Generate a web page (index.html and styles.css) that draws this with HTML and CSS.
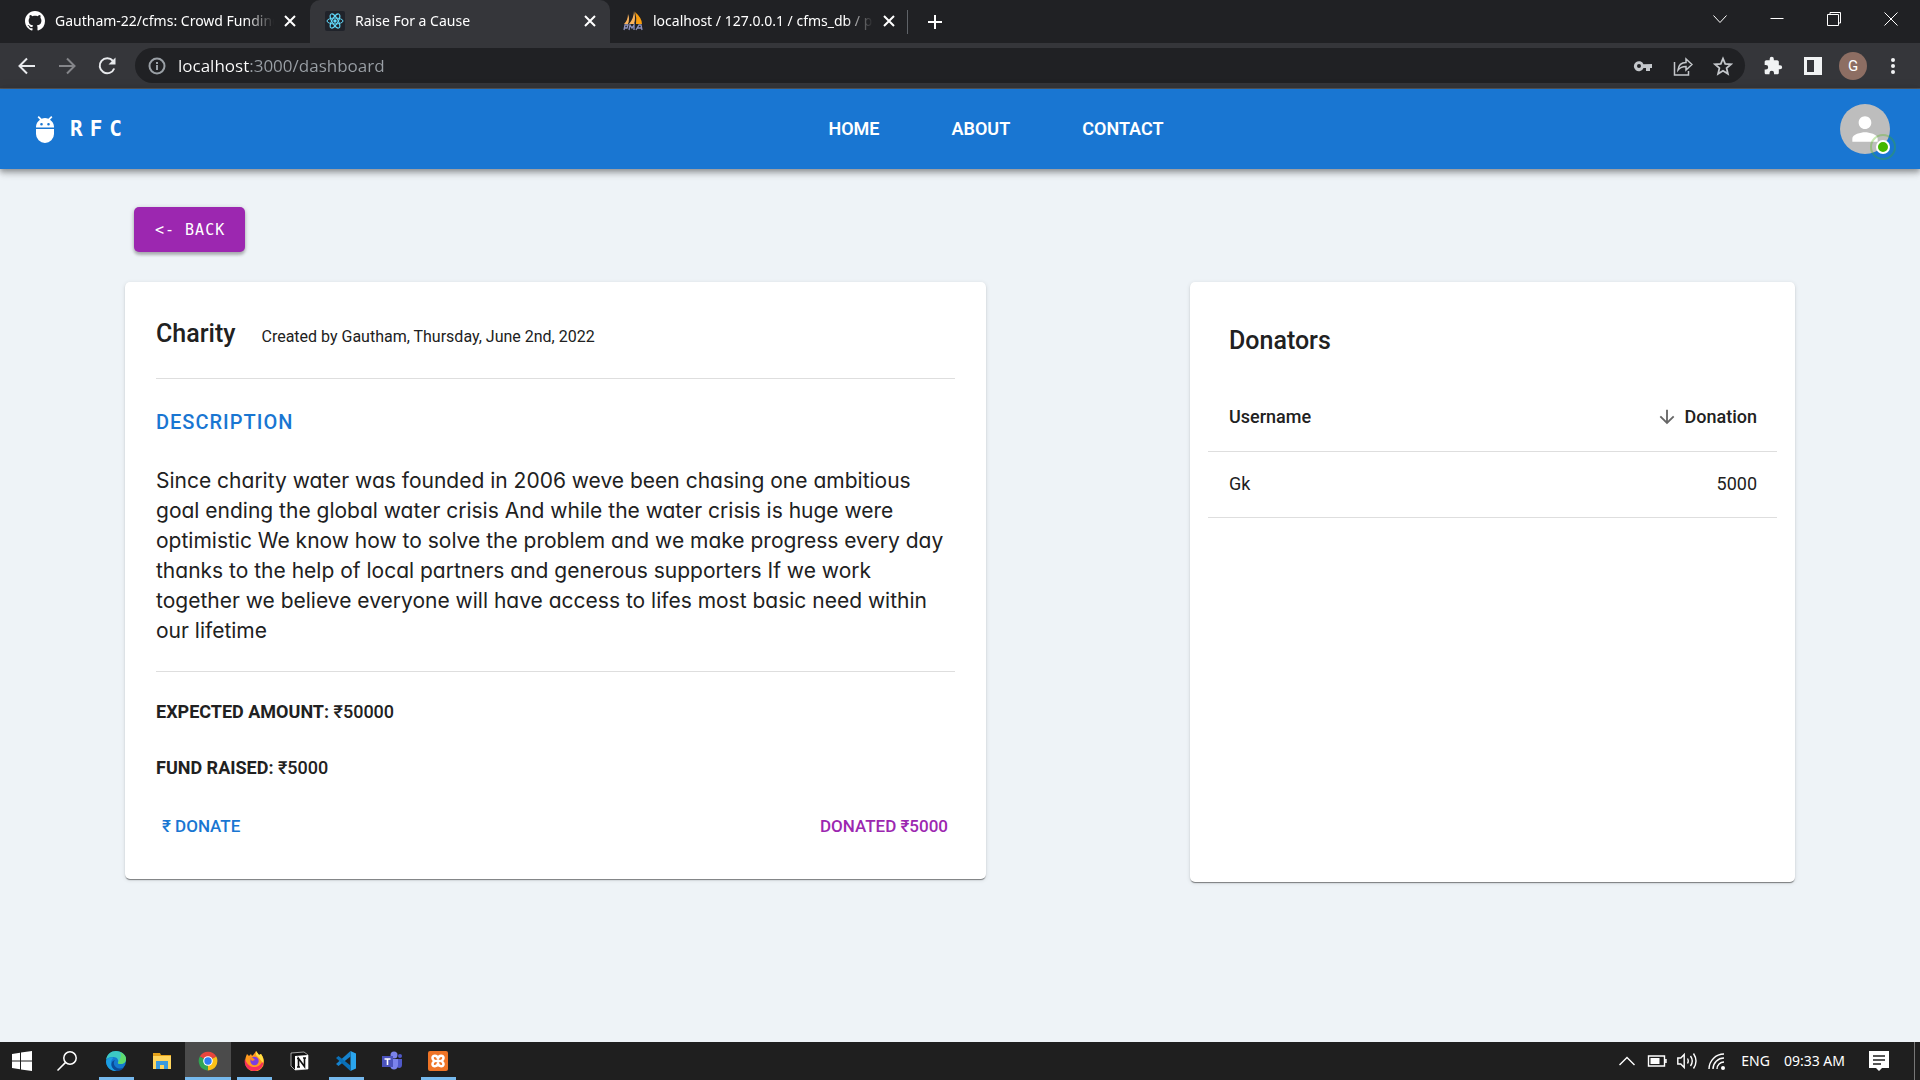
FILE: index.html
```html
<!DOCTYPE html>
<html lang="en">
<head>
<meta charset="utf-8">
<meta name="viewport" content="width=device-width, initial-scale=1">
<title>Raise For a Cause</title>
<link rel="stylesheet" href="styles.css">
</head>
<body>
<header class="browser">
  <div class="tabstrip">
    <div class="tab">
      <svg class="favicon" viewBox="0 0 16 16" fill="#fff"><path d="M8 0C3.58 0 0 3.58 0 8c0 3.54 2.29 6.53 5.47 7.59.4.07.55-.17.55-.38 0-.19-.01-.82-.01-1.49-2.01.37-2.53-.49-2.69-.94-.09-.23-.48-.94-.82-1.13-.28-.15-.68-.52-.01-.53.63-.01 1.08.58 1.23.82.72 1.21 1.87.87 2.33.66.07-.52.28-.87.51-1.07-1.78-.2-3.64-.89-3.64-3.95 0-.87.31-1.59.82-2.15-.08-.2-.36-1.02.08-2.12 0 0 .67-.21 2.2.82.64-.18 1.32-.27 2-.27s1.36.09 2 .27c1.53-1.04 2.2-.82 2.2-.82.44 1.1.16 1.92.08 2.12.51.56.82 1.27.82 2.15 0 3.07-1.87 3.75-3.65 3.95.29.25.54.73.54 1.48 0 1.07-.01 1.93-.01 2.2 0 .21.15.46.55.38A8.01 8.01 0 0 0 16 8c0-4.42-3.58-8-8-8z"/></svg>
      <button class="tab-title">Gautham-22/cfms: Crowd Funding</button>
      <button class="tab-close" aria-label="Close tab"><svg viewBox="0 0 12 12"><path d="M1 1l10 10M11 1L1 11"/></svg></button>
    </div>
    <div class="tab tab-active">
      <svg class="favicon" viewBox="0 0 20 20"><rect width="20" height="20" rx="2" fill="#20232a"/><g fill="none" stroke="#61dafb"><ellipse cx="10" cy="10" rx="8" ry="3"/><ellipse cx="10" cy="10" rx="8" ry="3" transform="rotate(60 10 10)"/><ellipse cx="10" cy="10" rx="8" ry="3" transform="rotate(120 10 10)"/></g><circle cx="10" cy="10" r="1.7" fill="#61dafb"/></svg>
      <button class="tab-title">Raise For a Cause</button>
      <button class="tab-close" aria-label="Close tab"><svg viewBox="0 0 12 12"><path d="M1 1l10 10M11 1L1 11"/></svg></button>
    </div>
    <div class="tab">
      <svg class="favicon" viewBox="0 0 20 20"><path d="M1 13Q5 9 5 3Q7 8 5 13zM6 13Q11 7 11 0Q13 8 11 13z" fill="#f9b25c"/><path d="M12 1Q19 7 19 13H13Q14 7 12 1z" fill="#f89c0e"/><path d="M1 19l1-5h3l-1 3H2M6 19l1-5 2 3 2-3v5M13 19l3-5h2l1 5M14 17h4" fill="none" stroke="#8f92bd" stroke-width="1.300"/></svg>
      <button class="tab-title">localhost / 127.0.0.1 / cfms_db / projects</button>
      <button class="tab-close" aria-label="Close tab"><svg viewBox="0 0 12 12"><path d="M1 1l10 10M11 1L1 11"/></svg></button>
    </div>
    <button class="new-tab" aria-label="New tab"><svg viewBox="0 0 16 16"><path d="M8 1v14M1 8h14"/></svg></button>
    <div class="window-controls">
      <button aria-label="Search tabs"><svg viewBox="0 0 14 14"><path d="M.5 3.500l6.500 7 6.500-7"/></svg></button>
      <button aria-label="Minimize"><svg viewBox="0 0 14 14"><path d="M.5 6.500h13"/></svg></button>
      <button aria-label="Restore"><svg viewBox="0 0 14 14"><path d="M.5 2.500h11v11H.5zM3 2.500v-2h10.500V11h-2"/></svg></button>
      <button aria-label="Close"><svg viewBox="0 0 14 14"><path d="M.5.500l13 13M13.500.500l-13 13"/></svg></button>
    </div>
  </div>
  <div class="toolbar">
    <button class="tool" aria-label="Back"><svg viewBox="0 0 20 20"><path d="M18 10H3M10 2.500L2.500 10l7.500 7.500"/></svg></button>
    <button class="tool tool-dim" aria-label="Forward"><svg viewBox="0 0 20 20"><path d="M2 10h15M10 2.500l7.500 7.500-7.500 7.500"/></svg></button>
    <button class="tool" aria-label="Reload"><svg viewBox="0 0 20 20"><path d="M16 5a7.500 7.500 0 1 0 1.200 7.500"/><path d="M18.500 1.500v7h-7z" fill="#e8eaed" stroke="none"/></svg></button>
    <div class="omnibox">
      <svg class="info" viewBox="0 0 18 18"><circle cx="9" cy="9" r="7.500"/><path d="M9 8v5M9 5v2"/></svg>
      <input class="url" type="text" aria-label="Address" value="localhost:3000/dashboard">
      <button class="omni-btn" aria-label="Passwords"><svg viewBox="0 0 20 20"><path d="M10.500 8.300A5 5 0 1 0 10.500 12H13v3h4v-3h2V8zM6 12a2 2 0 1 1 0-4 2 2 0 0 1 0 4z" fill="#c4c7cb" fill-rule="evenodd"/></svg></button>
      <button class="omni-btn" aria-label="Share"><svg viewBox="0 0 20 20" fill="none" stroke="#c4c7cb" stroke-width="1.500"><path d="M1.500 6v13h14v-4"/><path d="M5 14c.5-5 3-7.500 8-7.500V3l6 5.500-6 5.500v-3.500c-4 0-6 1-8 3.500z"/></svg></button>
      <button class="omni-btn" aria-label="Bookmark"><svg viewBox="0 0 20 20" fill="none" stroke="#c4c7cb" stroke-width="1.800"><path d="M10 2.500l2.200 5.300 5.800.5-4.400 3.800 1.300 5.700L10 14.800l-4.900 3 1.300-5.700L2 8.300l5.800-.5z"/></svg></button>
    </div>
    <button class="ext" aria-label="Extensions"><svg viewBox="0 0 24 24" fill="#f1f3f4"><path d="M20.500 11H19V7c0-1.100-.9-2-2-2h-4V3.500a2.500 2.500 0 0 0-5 0V5H4c-1.100 0-2 .9-2 2v3.800h1.500a2.700 2.700 0 0 1 0 5.400H2V20c0 1.100.9 2 2 2h3.800v-1.500a2.700 2.700 0 0 1 5.400 0V22H17c1.100 0 2-.9 2-2v-4h1.500a2.500 2.500 0 0 0 0-5z"/></svg></button>
    <button class="ext" aria-label="Side panel"><svg viewBox="0 0 20 20"><path d="M1 1h18v18H1zM4 4v12h7V4z" fill="#f1f3f4" fill-rule="evenodd"/></svg></button>
    <button class="profile">G</button>
    <button class="ext" aria-label="Menu"><svg viewBox="0 0 20 20" fill="#f1f3f4"><circle cx="10" cy="4" r="2"/><circle cx="10" cy="10" r="2"/><circle cx="10" cy="16" r="2"/></svg></button>
  </div>
</header>

<div class="appbar">
  <a class="brand" href="#"><svg viewBox="0 0 18 28" fill="#fff"><path d="M0 12.500a9 9 0 0 1 4-7.800L1.600 2.200 2.800 1l2.800 2.800a9 9 0 0 1 6.800 0L15.200 1l1.200 1.200L14 4.700a9 9 0 0 1 4 7.800zM5.500 8a1.300 1.300 0 1 0 0 2.600 1.300 1.300 0 0 0 0-2.600zm7 0a1.300 1.300 0 1 0 0 2.600 1.300 1.300 0 0 0 0-2.600zM0 14h18v5a9 9 0 0 1-18 0z" fill-rule="evenodd"/></svg><span>RFC</span></a>
  <nav class="nav"><a href="#">HOME</a><a href="#">ABOUT</a><a href="#">CONTACT</a></nav>
  <button class="avatar" aria-label="Account"><svg viewBox="0 0 24 24" fill="#fff"><path d="M12 12c2.210 0 4-1.790 4-4s-1.790-4-4-4-4 1.790-4 4 1.790 4 4 4zm0 2c-2.670 0-8 1.340-8 4v2h16v-2c0-2.660-5.330-4-8-4z"/></svg><span class="status"></span></button>
</div>

<main class="page">
  <button class="back">&lt;- BACK</button>
  <div class="cards">
    <article class="card campaign">
      <div class="campaign-head"><h1>Charity</h1><span>Created by Gautham, Thursday, June 2nd, 2022</span></div>
      <section class="campaign-body">
        <h2>DESCRIPTION</h2>
        <p>Since charity water was founded in 2006 weve been chasing one ambitious<br>goal ending the global water crisis And while the water crisis is huge were<br>optimistic We know how to solve the problem and we make progress every day<br>thanks to the help of local partners and generous supporters If we work<br>together we believe everyone will have access to lifes most basic need within<br>our lifetime</p>
      </section>
      <div class="amounts">
        <p><strong>EXPECTED AMOUNT:</strong> ₹50000</p>
        <p><strong>FUND RAISED:</strong> ₹5000</p>
      </div>
      <div class="actions"><button class="donate">₹ DONATE</button><button class="donated">DONATED ₹5000</button></div>
    </article>
    <section class="card donators">
      <h2>Donators</h2>
      <table>
        <thead><tr><th>Username</th><th class="num"><button class="sort"><svg viewBox="0 0 24 24"><path d="M20 12l-1.410-1.410L13 16.170V4h-2v12.170l-5.580-5.590L4 12l8 8 8-8z"/></svg>Donation</button></th></tr></thead>
        <tbody><tr><td>Gk</td><td class="num">5000</td></tr></tbody>
      </table>
    </section>
  </div>
</main>

<footer class="taskbar">
  <button class="task start" aria-label="Start"><svg viewBox="0 0 20 20" fill="#fff"><path d="M0 3l8-1.200v7.700H0zM9 1.600L20 0v9.500H9zM0 10.500h8v7.700L0 17zM9 10.500h11V20L9 18.400z"/></svg></button>
  <button class="task search" aria-label="Search"><svg viewBox="0 0 20 20" fill="none" stroke="#fff" stroke-width="1.500"><circle cx="13" cy="7" r="6.200"/><path d="M8.600 11.400L.5 19.500"/></svg></button>
  <button class="task running" aria-label="Edge"><svg viewBox="0 0 20 20"><circle cx="10" cy="10" r="10" fill="#1479cf"/><path d="M0 9C1 3 5 0 10 0c6 0 10 4 10 8 0 3-2.500 5-5.500 5-2 0-3-.8-2.500-1.600 1-2.400-1-5.400-4.500-5.400C4 6 1 7 0 9z" fill="#3cc8c4"/><path d="M14 1c4 1.500 6 4.500 6 7 0 3-2.500 5-5.500 5-2 0-3-.8-2.500-1.600 2-2.400 4-6.400 2-10.400z" fill="#5fdc6c"/><path d="M7.500 7C4 9 3.500 17 11 20 4 20.500 0 15.500 0 10c2-3.500 5-4 7.500-3z" fill="#1b9de2"/><path d="M9 9c-3 3 0 9 5 8.500 2 0 3.500-1 4.500-2C17 18.500 14 20 11 20 4 18 4 10 9 9z" fill="#0c4b97"/></svg></button>
  <button class="task" aria-label="File Explorer"><svg viewBox="0 0 20 20"><path d="M1 2h7l1 2h10v3H1z" fill="#e5a21a"/><path d="M1 5h18v13H1z" fill="#ffd55e"/><path d="M4 18v-8h12v8h-4v-4H8v4z" fill="#3b9ade"/></svg></button>
  <button class="task running current" aria-label="Chrome"><svg viewBox="0 0 20 20"><path d="M10 10L1.800 5.500A9.400 9.400 0 0 1 18.300 5.600z" fill="#e8453c"/><path d="M10 10l8.300-4.400A9.400 9.400 0 0 1 9.700 19.400z" fill="#fbc116"/><path d="M10 10l-.3 9.400A9.400 9.400 0 0 1 1.800 5.500z" fill="#31a552"/><circle cx="10" cy="10" r="4.800" fill="#fff"/><circle cx="10" cy="10" r="3.700" fill="#2d7df0"/></svg></button>
  <button class="task running" aria-label="Firefox"><svg viewBox="0 0 20 20"><path d="M3 3l2 2 2-2 1 2c2-2 3-3 4-5l3 4 2-1c2 3 3 5 3 8a9.500 9.500 0 0 1-19 0c0-3 1-6 2-8z" fill="#ff9a1f"/><path d="M1 8c1 3 3 7 8 8 4 .5 7-1 10-6 1 5-3 10-9 10A9.500 9.500 0 0 1 1 8z" fill="#f72f5c"/><path d="M12 0l3 4 2-1c2 3 3 6 2 9l-4-5-3-3z" fill="#ffe043"/><circle cx="10.500" cy="10" r="4.200" fill="#7b3ee0"/><path d="M5 6l4 1 2 2-3 1z" fill="#ff8a1c"/></svg></button>
  <button class="task" aria-label="Notion"><svg viewBox="0 0 20 20"><path d="M1 2l13-1 4 3v14l-13 1-4-4z" fill="#111" stroke="#ddd" stroke-width=".7"/><path d="M5 5l13-1v14l-13 1z" fill="#fff"/><path d="M8.500 16V7.500L14.500 15.500V7M7 7.500h2M7 16h3M13 7h3" fill="none" stroke="#111" stroke-width="1.600"/></svg></button>
  <button class="task running" aria-label="Visual Studio Code"><svg viewBox="0 0 20 20"><path d="M14.500 0L20 2.500v15L14.500 20z" fill="#2aa5ee"/><path d="M14.500 0v5.500L2.500 15 0 13z" fill="#1683cf"/><path d="M14.500 20v-5.500L2.500 5 0 7z" fill="#0a70b8"/></svg></button>
  <button class="task" aria-label="Teams"><svg viewBox="0 0 20 20"><circle cx="12" cy="4" r="3.500" fill="#7b83eb"/><circle cx="18" cy="5" r="2" fill="#5059c9"/><path d="M14 8h6v6c0 3-3 4-5 2z" fill="#5059c9"/><path d="M8 8h8v6c0 6-8 6-8 0z" fill="#7b83eb"/><path d="M0 5h11v11H0z" fill="#4b53bc"/><path d="M2.500 8h6M5.500 8v6" stroke="#fff" stroke-width="1.600"/></svg></button>
  <button class="task running" aria-label="XAMPP"><svg viewBox="0 0 20 20"><rect width="20" height="20" rx="2" fill="#ef7426"/><path d="M10 7.500C9 4 4.500 4 4.500 7c0 1.500 1 2.300 2 3-1 .7-2 1.500-2 3 0 3 4.500 3 5.500-.5 1 3.500 5.500 3.500 5.500.5 0-1.500-1-2.300-2-3 1-.7 2-1.500 2-3 0-3-4.500-3-5.500.5zM7.500 10h5" fill="none" stroke="#fff" stroke-width="2.600" stroke-linejoin="round"/></svg></button>
  <div class="tray">
    <svg viewBox="0 0 20 20"><path d="M2.500 14l7.500-7.500 7.500 7.500"/></svg>
    <svg viewBox="0 0 20 20"><path d="M1.500 5h16v10h-16zM19 8v4"/><path d="M3.500 7h9v6h-9z" fill="#fff" stroke="none"/></svg>
    <svg viewBox="0 0 20 20"><path d="M.8 7h3L7.200 3.500v13L3.800 13h-3zM10.500 7.500q1.500 2.500 0 5M13.500 5q3.500 5 0 10M16.500 2.500q5 7.500 0 15"/></svg>
    <svg viewBox="0 0 20 20"><path d="M2 18A15 15 0 0 1 17 3M6 18A11 11 0 0 1 17 7M10 18a7 7 0 0 1 7-7"/><circle cx="16" cy="17" r="2" fill="#fff" stroke="none"/></svg>
    <span>ENG</span>
    <time>09:33 AM</time>
    <svg class="notice" viewBox="0 0 20 20"><path d="M0 0h20v17h-7l-3 3-3-3H0z" fill="#fff" stroke="none"/><path d="M4 5h12M4 9h12M4 13h8" stroke="#1f1f1f"/></svg>
    <i class="peek"></i>
  </div>
</footer>
</body>
</html>
```
FILE: styles.css
```css
* { box-sizing: border-box; }
body {
  margin: 0;
  min-height: 100vh;
  display: flex;
  flex-direction: column;
  background: #eef3f7;
  color: #212121;
  font-family: Roboto, "Liberation Sans", sans-serif;
}
button { border: 0; padding: 0; background: none; color: inherit; font: inherit; cursor: pointer; }
a { color: inherit; text-decoration: none; }
svg { display: block; flex: none; }
h1, h2, p { margin: 0; }

/* Browser window */
.browser { background: #35363a; color: #fff; border-bottom: 1px solid #56585c; font-family: "Noto Sans", "Open Sans", sans-serif; }
.tabstrip { display: flex; height: 43px; background: #202124; padding-left: 10px; }
.tab { display: flex; align-items: center; flex: 0 1 300px; padding: 0 14px 1px 15px; min-width: 0; }
.tab-active { background: #35363a; border-radius: 10px 10px 0 0; }
.tab:nth-child(3) { flex-basis: 297px; padding: 0 12px 1px 13px; }
.favicon { width: 20px; height: 20px; margin-right: 10px; }
.tab-title {
  flex: 1;
  min-width: 0;
  margin-right: 10px;
  overflow: hidden;
  white-space: nowrap;
  text-align: left;
  font-size: 14px;
  line-height: 20px;
  -webkit-mask-image: linear-gradient(90deg, #000 calc(100% - 28px), transparent);
  mask-image: linear-gradient(90deg, #000 calc(100% - 28px), transparent);
}
.tab-close svg { width: 12px; height: 12px; stroke: #fff; stroke-width: 2; }
.new-tab { width: 56px; display: grid; place-items: center; position: relative; }
.new-tab::before { content: ""; position: absolute; left: 0; top: 10px; width: 1px; height: 24px; background: #5f6368; }
.new-tab svg { width: 16px; height: 16px; stroke: #fff; stroke-width: 2; fill: none; }
.window-controls { margin-left: auto; display: flex; align-items: center; height: 38px; padding-right: 1px; }
.window-controls button { width: 57px; height: 38px; display: grid; place-items: center; }
.window-controls svg { width: 14px; height: 14px; fill: none; stroke: #fff; }
.toolbar { display: flex; align-items: center; height: 45px; padding: 0 7px; }
.tool { width: 40px; height: 35px; display: grid; place-items: center; }
.tool svg { width: 20px; height: 20px; fill: none; stroke: #e8eaed; stroke-width: 2; }
.tool-dim svg { stroke: #85868a; }
.omnibox { flex: 1; min-width: 0; height: 35px; margin: 0 8px; display: flex; align-items: center; padding: 0 2px 0 13px; border-radius: 18px; background: #202124; }
.info { width: 18px; height: 18px; fill: none; stroke: #9aa0a6; stroke-width: 2; }
.url {
  flex: 1;
  min-width: 0;
  margin-left: 12px;
  padding: 0;
  border: 0;
  outline: 0;
  font-family: "Open Sans", "Noto Sans", sans-serif;
  font-size: 17px;
  line-height: 24px;
  color: #9aa0a6;
  background: linear-gradient(90deg, #fff 71px, #9aa0a6 71px);
  -webkit-background-clip: text;
  background-clip: text;
  -webkit-text-fill-color: transparent;
}
.omni-btn, .ext { width: 40px; height: 35px; display: grid; place-items: center; }
.omni-btn svg { width: 20px; height: 20px; }
.ext svg { width: 20px; height: 20px; }
.profile { width: 28px; height: 28px; margin: 0 6px; border-radius: 50%; background: #8d6e63; font-size: 15px; line-height: 28px; font-family: Roboto, sans-serif; }

/* Application bar */
.appbar {
  position: relative;
  display: grid;
  grid-template-columns: 1fr auto 1fr;
  align-items: center;
  height: 80px;
  padding: 0 30px 0 36px;
  background: #1976d2;
  color: #fff;
  box-shadow: 0 2px 5px rgba(0, 0, 0, .25), 0 5px 6px rgba(0, 0, 0, .15), 0 1px 12px rgba(0, 0, 0, .12);
}
.brand { display: flex; align-items: center; gap: 16px; font: 700 21px/30px "DejaVu Sans Mono", monospace; letter-spacing: 7px; }
.brand svg { width: 18px; height: 28px; }
.nav { display: flex; gap: 72px; padding-left: 66px; font-size: 18px; line-height: 24px; font-weight: 600; }
.avatar { justify-self: end; position: relative; width: 50px; height: 50px; border-radius: 50%; background: #bdbdbd; display: grid; place-items: center; }
.avatar svg { width: 38px; height: 38px; }
.status { position: absolute; right: 0; bottom: 0; width: 14px; height: 14px; border: 2px solid #fff; border-radius: 50%; background: #44b700; }
.status::after { content: ""; position: absolute; inset: -8px; border: 2px solid #44b700; border-radius: 50%; opacity: .3; }

/* Page */
.page { flex: 1; padding: 38px 125px 48px; }
.back {
  display: block;
  height: 45px;
  margin: 0 0 30px 9px;
  padding: 2px 20px 0 21px;
  border-radius: 5px;
  background: #9c27b0;
  color: #fff;
  font: 15px/43px "DejaVu Sans Mono", monospace;
  letter-spacing: 1px;
  box-shadow: 0 3px 3px rgba(0, 0, 0, .2), 0 1px 5px rgba(0, 0, 0, .2);
}
.cards { display: grid; grid-template-columns: 861fr 605fr; column-gap: 204px; align-items: start; }
.card { background: #fff; border-radius: 5px; box-shadow: 0 2px 1px -1px rgba(0, 0, 0, .3), 0 1px 1px rgba(0, 0, 0, .2), 0 1px 4px rgba(0, 0, 0, .12); }
.campaign { padding: 31px 31px 35px; }
.campaign-head { display: flex; align-items: baseline; gap: 26px; padding: 4px 0 28px; border-bottom: 1px solid #dedede; }
.campaign-head h1, .donators h2 { font-size: 25px; line-height: 33px; font-weight: 500; }
.campaign-head span { font-size: 16px; line-height: 24px; }
.campaign-body { padding: 28px 0 25px; border-bottom: 1px solid #dedede; }
.campaign-body h2 { margin-bottom: 29px; color: #1976d2; font-size: 20px; line-height: 30px; font-weight: 500; letter-spacing: 1px; }
.campaign-body p { font-family: Inter, "Open Sans", sans-serif; font-size: 21px; line-height: 30px; font-weight: 400; font-feature-settings: "cv11"; }
.amounts { display: grid; gap: 32px; padding: 28px 0; font-size: 18px; line-height: 24px; font-weight: 500; }
.amounts strong { font-weight: 700; }
.actions { display: flex; justify-content: space-between; padding: 6px 7px 6px 6px; font-size: 17px; line-height: 24px; font-weight: 500; }
.donate { color: #1976d2; }
.donated { color: #9c27b0; }
.donators { min-height: 600px; padding: 42px 18px; }
.donators h2 { padding: 0 21px 29px; }
.donators table { width: 100%; border-collapse: collapse; font-size: 18px; line-height: 24px; }
.donators th, .donators td { padding: 20px 20px 21px 21px; border-bottom: 1px solid #dedede; text-align: left; font-weight: 400; }
.donators th { padding: 19px 20px 22px 21px; font-weight: 500; }
.donators .num { text-align: right; }
.sort { display: flex; align-items: center; gap: 6px; margin-left: auto; }
.sort svg { width: 22px; height: 22px; fill: #666; }

/* Taskbar */
.taskbar { display: flex; height: 38px; background: #1f1f1f; color: #fff; font: 14px/20px "Noto Sans", "Open Sans", sans-serif; }
.task { position: relative; width: 46px; display: grid; place-items: center; }
.task.start { width: 44px; }
.task.search { width: 49px; padding-right: 4px; }
.task svg { width: 20px; height: 20px; }
.task.running::after { content: ""; position: absolute; left: 6px; right: 5px; bottom: 0; height: 3px; background: #76b9ed; }
.task.current { background: #4b4b4b; }
.task.current::after { left: 0; right: 0; }
.tray { margin-left: auto; display: flex; align-items: center; gap: 10px; }
.tray svg { width: 20px; height: 20px; fill: none; stroke: #fff; stroke-width: 1.400; }
.tray span, .tray time { margin-left: 4px; }
.tray .notice { margin-left: 14px; }
.peek { align-self: stretch; width: 6px; margin-left: 15px; border-left: 1px solid #777; }
```
